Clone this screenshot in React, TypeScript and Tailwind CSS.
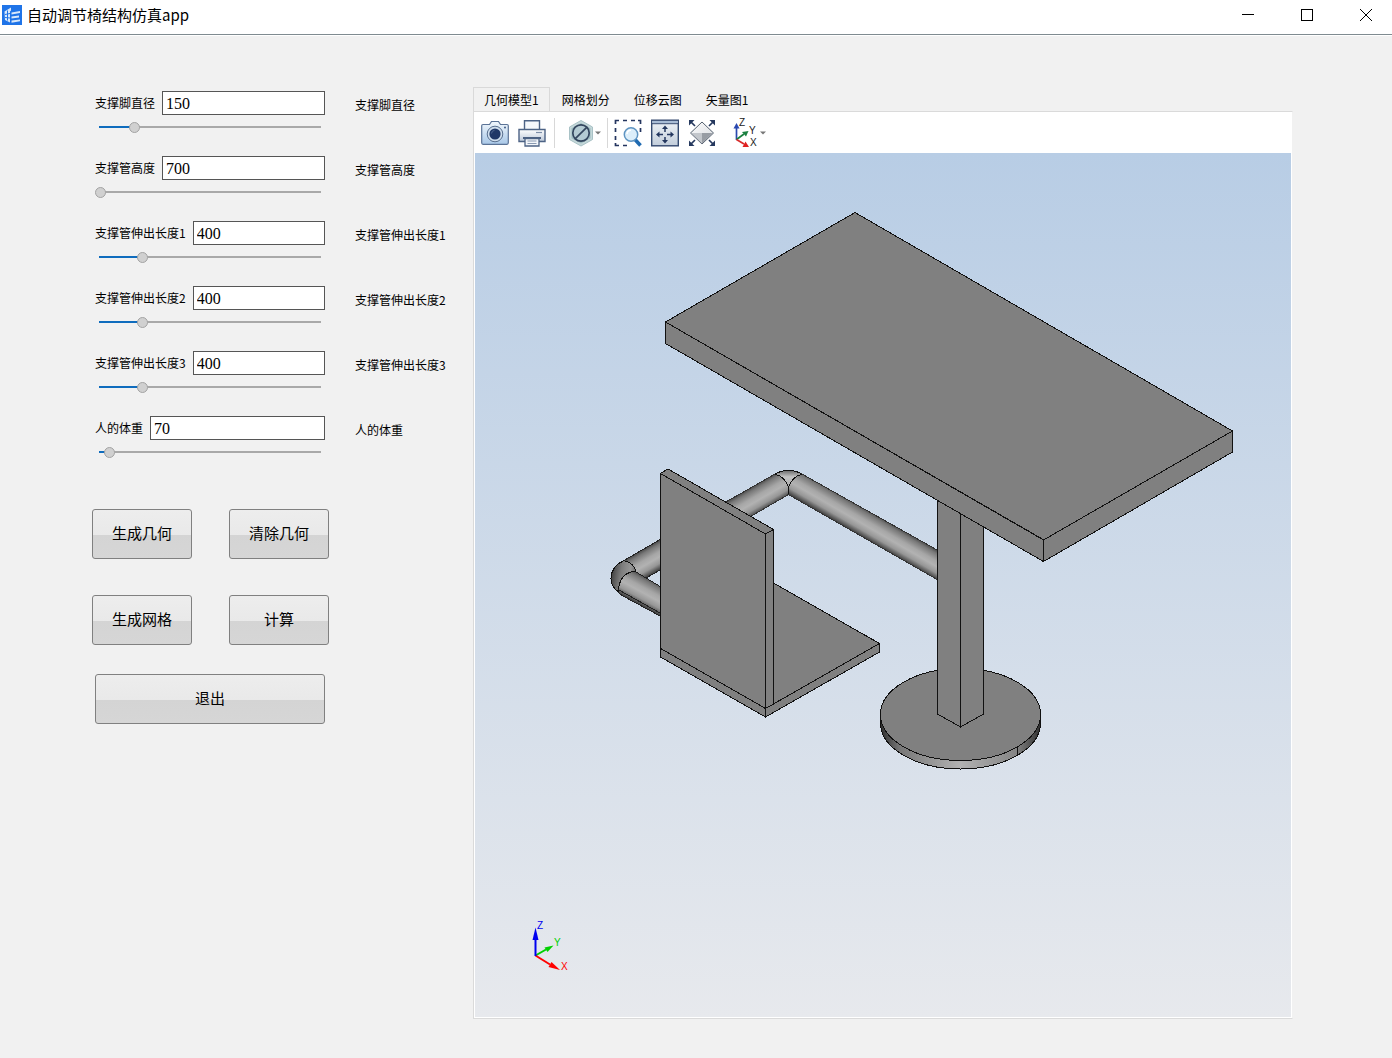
import React, { useState } from 'react';
import clsx from 'clsx';

interface Param {
  id: string;
  label: string;
  value: number;
  min: number;
  max: number;
}

const PARAMS: Param[] = [
  { id: 'foot', label: '支撑脚直径', value: 150, min: 100, max: 420 },
  { id: 'height', label: '支撑管高度', value: 700, min: 700, max: 1000 },
  { id: 'len1', label: '支撑管伸出长度1', value: 400, min: 300, max: 820 },
  { id: 'len2', label: '支撑管伸出长度2', value: 400, min: 300, max: 820 },
  { id: 'len3', label: '支撑管伸出长度3', value: 400, min: 300, max: 820 },
  { id: 'weight', label: '人的体重', value: 70, min: 50, max: 550 },
];

const TABS = ['几何模型1', '网格划分', '位移云图', '矢量图1'];

const AppIcon = () => (
  <svg viewBox="0 0 20 20" className="h-5 w-5" aria-hidden="true">
    <rect width="20" height="20" fill="#1f74e8" />
    <path d="M2.500 6.500 9 2.500v3L8 6.500v11L3 15z" fill="#d9e9fb" />
    <path d="M9.500 7.500 18 6v2L9.500 9.500zM9.500 11.500l7.500-1v2l-7.500 1zM9.500 15.500l8.500-1v1.800l-8.500 1.500z" fill="#d9e9fb" />
    <path d="M3 9.500 8 8.500M3 12.500l5 .5M5.500 5.500v10" stroke="#1f74e8" strokeWidth="1" fill="none" />
  </svg>
);

const TitleBar = () => (
  <header className="flex h-[35px] items-start justify-between border-b border-[#7f8b90] bg-white">
    <div className="flex h-[30px] items-center gap-[5px] pl-[2px]">
      <AppIcon />
      <h1 className="text-[15px] leading-5">自动调节椅结构仿真app</h1>
    </div>
    <div className="flex gap-[7px]">
      <button aria-label="最小化" className="flex h-[30px] w-[52px] items-center justify-center hover:bg-gray-200">
        <svg viewBox="0 0 12 12" className="h-3 w-3"><path d="M0 5.500h12" stroke="#000" /></svg>
      </button>
      <button aria-label="最大化" className="flex h-[30px] w-[52px] items-center justify-center hover:bg-gray-200">
        <svg viewBox="0 0 12 12" className="h-3 w-3"><rect x=".5" y=".5" width="11" height="11" fill="none" stroke="#000" /></svg>
      </button>
      <button aria-label="关闭" className="flex h-[30px] w-[52px] items-center justify-center hover:bg-red-500">
        <svg viewBox="0 0 12 12" className="h-3 w-3"><path d="M0 0l12 12M12 0L0 12" stroke="#000" /></svg>
      </button>
    </div>
  </header>
);

interface ParamRowProps {
  param: Param;
  value: number;
  onChange: (value: number) => void;
}

const ParamRow: React.FC<ParamRowProps> = ({ param, value, onChange }) => {
  const percent = ((value - param.min) / (param.max - param.min)) * 100;

  return (
    <div className="flex gap-[30px]">
      <div className="w-[230px]">
        <div className="flex items-center gap-[7px]">
          <label htmlFor={param.id} className="whitespace-nowrap text-xs">{param.label}</label>
          <input
            id={param.id}
            type="text"
            value={value}
            onChange={e => onChange(Number(e.target.value) || 0)}
            className="h-6 min-w-0 flex-1 border border-[#555] bg-white px-[3px] pt-px font-['Liberation_Serif','Noto_Sans_CJK_SC',serif] text-base leading-5 outline-none"
          />
        </div>
        <div className="mt-1.5 grid items-center">
          <div className="col-start-1 row-start-1 mx-1 h-0.5 bg-[#a9a9a9]">
            <div className="h-full bg-[#0f6cbd]" style={{ width: `${percent}%` }} />
          </div>
          <input
            type="range"
            aria-label={param.label}
            min={param.min}
            max={param.max}
            value={value}
            onChange={e => onChange(Number(e.target.value))}
            className="col-start-1 row-start-1 h-3 w-full appearance-none bg-transparent [&::-webkit-slider-thumb]:h-[11px] [&::-webkit-slider-thumb]:w-[11px] [&::-webkit-slider-thumb]:appearance-none [&::-webkit-slider-thumb]:rounded-full [&::-webkit-slider-thumb]:border [&::-webkit-slider-thumb]:border-[#a3a3a3] [&::-webkit-slider-thumb]:bg-[#d0d0d0]"
          />
        </div>
      </div>
      <span className="whitespace-nowrap pt-[6px] text-xs">{param.label}</span>
    </div>
  );
};

const ActionButton: React.FC<{ children: React.ReactNode; className?: string }> = ({ children, className }) => (
  <button
    className={clsx(
      'h-[50px] rounded-[3px] border border-[#808080] bg-[linear-gradient(#ededed,#e9e9e9_52%,#d4d4d4_52%,#d6d6d6)] pb-[3px] text-[15px] leading-5 active:brightness-95',
      className,
    )}
  >
    {children}
  </button>
);

const Caret = () => (
  <svg viewBox="0 0 6 4" className="h-1 w-1.5" aria-hidden="true"><path d="M0 .5h6L3 3.500z" fill="#777" /></svg>
);

const Separator = () => <div className="h-[30px] w-px bg-[#d8d8d8]" />;

const Toolbar = () => (
  <div className="flex h-[41px] items-center bg-white pl-[6px]">
    <div className="mr-2 flex gap-[9px]">
      <button aria-label="快照">
        <svg viewBox="0 0 28 28" className="h-7 w-7">
          <defs>
            <linearGradient id="cam" x1="0" y1="0" x2="0" y2="1">
              <stop offset="0" stopColor="#f1f7fc" />
              <stop offset="1" stopColor="#a9c8e8" />
            </linearGradient>
          </defs>
          <path d="M2 5.500h6.500l2-3h7l2 3H26q1.300 0 1.300 1.300v17q0 1.500-1.300 1.500H2Q.7 25.300.7 23.800v-17Q.7 5.500 2 5.500z" fill="url(#cam)" stroke="#5b7396" strokeWidth="1.200" />
          <circle cx="14" cy="15" r="7.800" fill="#cfdeed" stroke="#59708f" strokeWidth="1" />
          <circle cx="14" cy="15" r="5.600" fill="#1f3767" />
          <path d="M10.500 14.500a3.500 3.500 0 0 1 3-3.200" stroke="#4d658f" strokeWidth="1" fill="none" />
          <circle cx="24" cy="8.500" r=".9" fill="#314d79" />
        </svg>
      </button>
      <button aria-label="打印">
        <svg viewBox="0 0 28 28" className="h-7 w-7">
          <defs>
            <linearGradient id="prn" x1="0" y1="0" x2="0" y2="1">
              <stop offset="0" stopColor="#ffffff" />
              <stop offset="1" stopColor="#bcc8d8" />
            </linearGradient>
          </defs>
          <path d="M6.500 11V1.700h15V11" fill="#f5f8fb" stroke="#4d6385" strokeWidth="1.400" />
          <path d="M1 10.500h26v12H1z" fill="url(#prn)" stroke="#4d6385" strokeWidth="1.400" />
          <path d="M18 13.500h6" stroke="#7c8ea8" strokeWidth="1.200" />
          <path d="M5 19h18" stroke="#2b426a" strokeWidth="1.600" />
          <path d="M7 19.500h14V27H7z" fill="#f3f6fa" stroke="#4d6385" strokeWidth="1.300" />
          <path d="M9.500 22h9M9.500 24.500h9" stroke="#8a9ab2" strokeWidth="1" />
        </svg>
      </button>
    </div>
    <Separator />
    <button aria-label="选择模式" className="mr-1.5 ml-3 flex items-center">
      <svg viewBox="0 0 28 28" className="h-7 w-7">
        <path d="M14 1.500 25.500 8v12.500L14 27 2.500 20.500V8z" fill="#c5d8da" stroke="#a9c2c6" strokeWidth="1" />
        <path d="M14 4 23.500 9.300v10L14 24.500 4.500 19.300v-10z" fill="#9dbbc0" />
        <circle cx="14" cy="14" r="8.200" fill="#b4cbd3" stroke="#34465e" strokeWidth="1.700" />
        <path d="M8.300 19.700 19.700 8.300" stroke="#34465e" strokeWidth="1.700" />
      </svg>
      <Caret />
    </button>
    <Separator />
    <div className="ml-1.5 flex gap-[9px]">
      <button aria-label="框选缩放">
        <svg viewBox="0 0 28 28" className="h-7 w-7">
          <path d="M1.500 5V1.500H5M9 1.500h4M17 1.500h4M24 1.500h2.500V5M26.500 9v4M1.500 9v4M1.500 17v4M1.500 24v2.500H5M9 26.500h4" fill="none" stroke="#24355f" strokeWidth="1.700" />
          <path d="M21 20.500l5.500 6" stroke="#1f6ab1" strokeWidth="3.600" />
          <circle cx="17" cy="15.500" r="6.700" fill="#dceefa" stroke="#5e94c2" strokeWidth="1.500" />
          <path d="M13 15a4 4 0 0 1 4-3.700" stroke="#fff" strokeWidth="1.500" fill="none" />
        </svg>
      </button>
      <button aria-label="平移">
        <svg viewBox="0 0 28 28" className="h-7 w-7">
          <defs>
            <linearGradient id="pan" x1="0" y1="0" x2="0" y2="1">
              <stop offset="0" stopColor="#eff3f7" />
              <stop offset="1" stopColor="#c3cedb" />
            </linearGradient>
          </defs>
          <rect x=".7" y="1.200" width="26.600" height="25.600" fill="url(#pan)" stroke="#34496f" strokeWidth="1.400" />
          <path d="M1.400 2h25.200v2H1.400z" fill="#a9bdd6" />
          <path d="M.7 4.700h26.600" stroke="#34496f" />
          <path d="M14 9v4M14 18v4M8 15.500h4M16 15.500h4" stroke="#24375f" strokeWidth="1.500" />
          <path d="M14 6.500 17 10h-6zM14 24.500 17 21h-6zM5 15.500 8.500 12.500v6zM23 15.500 19.500 12.500v6z" fill="#24375f" />
        </svg>
      </button>
      <button aria-label="适应窗口">
        <svg viewBox="0 0 28 28" className="h-7 w-7">
          <defs>
            <linearGradient id="fit" x1="0" y1="0" x2="1" y2="1">
              <stop offset="0" stopColor="#fbfbfc" />
              <stop offset="1" stopColor="#d9dce0" />
            </linearGradient>
          </defs>
          <path d="M2.500 2.500 7 7M25.500 2.500 21 7M2.500 25.500 7 21M25.500 25.500 21 21" stroke="#26395f" strokeWidth="1.700" />
          <path d="M1 1h5.500L1 6.500zM27 1h-5.500L27 6.500zM1 27h5.500L1 21.500zM27 27h-5.500L27 21.500z" fill="#26395f" />
          <path d="M14 3 25.500 14 14 25 2.500 14z" fill="url(#fit)" stroke="#54606e" strokeWidth="1" />
          <path d="M3.500 14h21L14 24.500z" fill="#989da4" />
          <path d="M14 14v10.500L3.500 14z" fill="#c3c7cc" />
        </svg>
      </button>
    </div>
    <button aria-label="视图方向" className="ml-4 flex items-center">
      <svg viewBox="0 0 28 28" className="h-7 w-7 overflow-visible">
        <path d="M4.500 21V8" stroke="#2a48b0" strokeWidth="1.700" />
        <path d="M4.500 4 7.500 9.500h-6z" fill="#2a48b0" />
        <path d="M4.500 20.500 12 15" stroke="#1a8040" strokeWidth="1.700" />
        <path d="M16.500 12 14 17.500l-4-4.500z" fill="#1a8040" />
        <path d="M4.500 20.500 12 25" stroke="#d82a2a" strokeWidth="1.700" />
        <path d="M17 28h-6.500l3-5.500z" fill="#e02020" />
        <g className="font-['Liberation_Sans',sans-serif] text-[10px]" fill="#222">
          <text x="7" y="7">Z</text>
          <text x="17" y="15">Y</text>
          <text x="18" y="27">X</text>
        </g>
      </svg>
      <Caret />
    </button>
  </div>
);

const TubeStops = () => (
  <>
    <stop offset="0" stopColor="#454545" />
    <stop offset=".15" stopColor="#787878" />
    <stop offset=".4" stopColor="#a6a6a6" />
    <stop offset=".58" stopColor="#b2b2b2" />
    <stop offset=".8" stopColor="#969696" />
    <stop offset="1" stopColor="#454545" />
  </>
);

const ModelView = () => (
  <svg
    viewBox="475 153 816 864"
    role="img"
    aria-label="几何模型"
    className="min-h-0 w-full grow basis-[480px] bg-[linear-gradient(#b8cde5,#e7e9ed)]"
  >
    <defs>
      <linearGradient id="tubeA" gradientUnits="userSpaceOnUse" x1="938" y1="550" x2="925" y2="572.500"><TubeStops /></linearGradient>
      <linearGradient id="tubeB" gradientUnits="userSpaceOnUse" x1="725" y1="502" x2="738" y2="524.500"><TubeStops /></linearGradient>
      <linearGradient id="tubeC" gradientUnits="userSpaceOnUse" x1="624" y1="560" x2="637" y2="582.500"><TubeStops /></linearGradient>
      <linearGradient id="tubeD" gradientUnits="userSpaceOnUse" x1="636" y1="571" x2="623" y2="595"><TubeStops /></linearGradient>
      <linearGradient id="bendTop" x1="0" y1="0" x2="0" y2="1">
        <stop offset="0" stopColor="#666" />
        <stop offset=".4" stopColor="#c4c4c4" />
        <stop offset="1" stopColor="#aaa" />
      </linearGradient>
      <linearGradient id="bendLeft" x1="0" y1="0.300" x2="1" y2="0.500">
        <stop offset="0" stopColor="#3a3a3a" />
        <stop offset=".4" stopColor="#7c7c7c" />
        <stop offset=".75" stopColor="#969696" />
        <stop offset="1" stopColor="#666" />
      </linearGradient>
      <linearGradient id="rim" x1="0" y1="0" x2="1" y2="0">
        <stop offset="0" stopColor="#2f2f2f" />
        <stop offset=".12" stopColor="#777" />
        <stop offset=".5" stopColor="#b2b2b2" />
        <stop offset=".85" stopColor="#858585" />
        <stop offset="1" stopColor="#2f2f2f" />
      </linearGradient>
    </defs>

    <g stroke="#111" strokeWidth="1" shapeRendering="crispEdges">
      {/* base disc */}
      <path d="M880.500 715v8a80 46 0 0 0 160 0v-8z" fill="url(#rim)" />
      <ellipse cx="960.500" cy="714.500" rx="80" ry="46" fill="#808080" />
      <path d="M1017.500 747v9" />

      {/* support tube */}
      <path d="M938 550.500 801 473.500q-11.500 4-12.500 12.500v8.500L938 580z" fill="url(#tubeA)" stroke="none" />
      <path d="M775 474 725 502.500v29L788.500 494.500V486q-2-8-13.500-12z" fill="url(#tubeB)" stroke="none" />
      <path d="M775 474q13.500-7.500 27 0-10 3-13.500 13-3.500-10-13.500-13z" fill="url(#bendTop)" />
      <path d="M788.500 486v8.500" />
      <path d="M938 550.500 801 473.500M938 580 788.500 494.500 740 522.500M775 474 725 502.500" fill="none" stroke="#333" />
      <path d="M624 560.500 661 539v30.500L646 578l-10-6z" fill="url(#tubeC)" stroke="none" />
      <path d="M618 591.500q0-16 14-20l4 .5L661 587v29.500L622 595z" fill="url(#tubeD)" stroke="none" />
      <path d="M624 560.500q-13 6-13 18 0 8 7.500 13.500 0-17 14-20.500l3.500.5q-2-9-12-11.500z" fill="url(#bendLeft)" />
      <path d="M624 560.500 661 539M636 572l10 6 15-8.500M646 578l15 9M618 589.500 661 613.500M618 592l4 3.500 39 21" fill="none" stroke="#222" />

      {/* post */}
      <path d="M937.500 490H960.500V727L937.500 714z" fill="#808080" />
      <path d="M960.500 490H983.500V714L960.500 727z" fill="#808080" />

      {/* table top */}
      <path d="M855 212.500 1232.500 431 1044 540 665.500 322z" fill="#808080" />
      <path d="M665.500 322 1043.500 540V561.500L665.500 343.500z" fill="#808080" />
      <path d="M1043.500 540 1232.500 431V452L1043.500 561.500z" fill="#808080" />

      {/* seat */}
      <path d="M773.500 583 879.500 643.500 766 708.500V583z" fill="#808080" />
      <path d="M765.500 708.500 879.500 643.500V652L765.500 717z" fill="#808080" />
      <path d="M660.500 648.500 765.500 708.500V717L660.500 657z" fill="#808080" />

      {/* backrest */}
      <path d="M660.500 473.500 668 469 773.500 529.500 765.500 534z" fill="#808080" />
      <path d="M765.500 534 773.500 529.500V704L765.500 708.500z" fill="#808080" />
      <path d="M660.500 473.500 765.500 534V708.500L660.500 648.500z" fill="#808080" />
    </g>

    {/* axis triad */}
    <path d="M535.500 955.500 546 949.500" stroke="#00d000" strokeWidth="2" />
    <path d="M553.500 945.500 547.500 952l-3-4.500z" fill="#00d000" />
    <path d="M535.500 955.500 550 964.500" stroke="#f00" strokeWidth="2" />
    <path d="M560 970l-11.500-3 3-5z" fill="#f00" />
    <path d="M535.500 956V938" stroke="#0000f0" strokeWidth="2" />
    <path d="M535.500 927.500 538.500 940h-6z" fill="#0000f0" />
    <g className="font-['Liberation_Sans',sans-serif] text-[10px]">
      <text x="537" y="929" fill="#0000f0">Z</text>
      <text x="554" y="946" fill="#00d000">Y</text>
      <text x="561" y="970" fill="#f00">X</text>
    </g>
  </svg>
);

export default function App() {
  const [values, setValues] = useState<number[]>(PARAMS.map(p => p.value));
  const [activeTab, setActiveTab] = useState(0);

  const updateValue = (index: number, value: number) => {
    setValues(prev => prev.map((v, i) => (i === index ? value : v)));
  };

  return (
    <div className="flex min-h-screen flex-col bg-[#f1f1f1] font-['Noto_Sans_CJK_SC',sans-serif] text-black">
      <TitleBar />
      <main className="flex flex-1 gap-[27px] border-t border-white pr-[99px] pb-[39px] pl-[92px]">
        <section className="w-[354px] shrink-0 pt-[55px]">
          <div className="flex flex-col gap-[23px] pl-[3px]">
            {PARAMS.map((param, i) => (
              <ParamRow key={param.id} param={param} value={values[i]} onChange={v => updateValue(i, v)} />
            ))}
          </div>

          <div className="mt-[51px] w-[237px]">
            <div className="grid grid-cols-2 gap-x-[37px] gap-y-9">
              <ActionButton>生成几何</ActionButton>
              <ActionButton>清除几何</ActionButton>
              <ActionButton>生成网格</ActionButton>
              <ActionButton>计算</ActionButton>
            </div>
            <div className="mt-[29px] flex pr-1 pl-[3px]">
              <ActionButton className="flex-1">退出</ActionButton>
            </div>
          </div>
        </section>

        <section className="flex min-w-0 flex-1 flex-col pt-[51px]">
          <div role="tablist" className="flex">
            {TABS.map((tab, i) => (
              <button
                key={tab}
                role="tab"
                aria-selected={i === activeTab}
                onClick={() => setActiveTab(i)}
                className={clsx(
                  'h-6 border-x border-t text-xs',
                  i === activeTab ? 'border-[#d9d9d9] px-[10px]' : 'border-transparent px-[11px]',
                )}
              >
                {tab}
              </button>
            ))}
          </div>
          <div className="flex flex-1 flex-col border border-[#dadada] border-r-[#f1f1f1] bg-white px-px pb-px">
            <Toolbar />
            <ModelView />
          </div>
        </section>
      </main>
    </div>
  );
}
